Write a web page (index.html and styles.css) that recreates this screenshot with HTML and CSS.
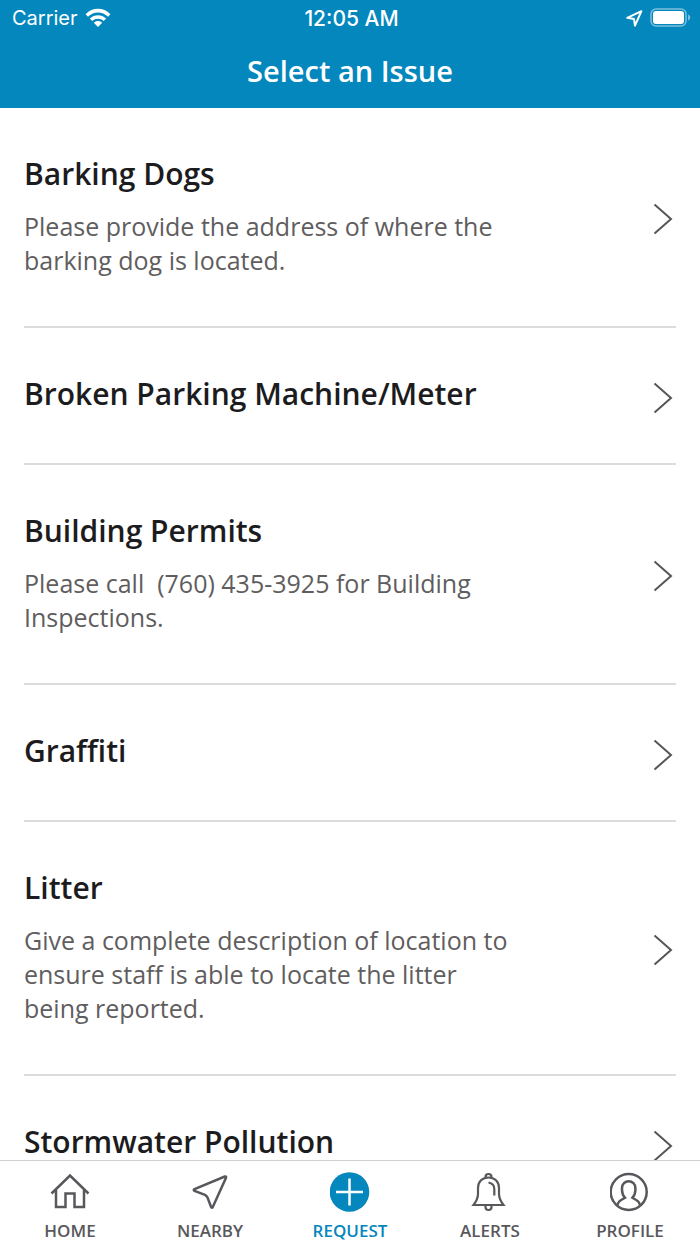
FILE: index.html
```html
<!DOCTYPE html>
<html lang="en">
<head>
<meta charset="utf-8">
<meta name="viewport" content="width=device-width, initial-scale=1">
<title>Select an Issue</title>
<link rel="stylesheet" href="styles.css">
</head>
<body>
<div class="app">
  <header class="header">
    <div class="status">
      <div class="status-left">
        <span>Carrier</span>
        <svg class="wifi" viewBox="0 0 26 19" aria-hidden="true">
          <path d="M0.6 6.2C7.4-1.1 18.6-1.1 25.4 6.2L23 8.8C17.4 3 8.600 3 3 8.800Z"/>
          <path d="M4.800 10.500C9.300 6 16.700 6 21.200 10.500L18.700 13.100C15.500 10.100 10.500 10.100 7.300 13.100Z"/>
          <path d="M8.800 14.800C11.200 12.500 14.800 12.500 17.200 14.800L13 19Z"/>
        </svg>
      </div>
      <div class="clock">12:05 AM</div>
      <div class="status-right">
        <svg class="location" viewBox="0 0 17 17" aria-hidden="true"><path d="M1.200 7.800L15.400 1.200L9 15.600L8 9Z"/></svg>
        <svg class="battery" viewBox="0 0 41 20" aria-hidden="true">
          <rect class="shell" x="1" y="1" width="35" height="17" rx="5"/>
          <rect class="charge" x="3" y="3" width="31" height="13" rx="3"/>
          <path class="cap" d="M38 6.500C41 7.500 41 11.500 38 12.500Z"/>
        </svg>
      </div>
    </div>
    <h1 class="title">Select an Issue</h1>
  </header>
  <main class="issues">
    <a class="issue" href="#barking-dogs">
      <div class="issue-text"><h2>Barking Dogs</h2><p>Please provide the address of where the barking dog is located.</p></div>
      <svg class="chevron" viewBox="0 0 20 32" aria-hidden="true"><path d="M1.500 1.500L18 16L1.500 30.500"/></svg>
    </a>
    <a class="issue" href="#parking-meter">
      <div class="issue-text"><h2>Broken Parking Machine/Meter</h2></div>
      <svg class="chevron" viewBox="0 0 20 32" aria-hidden="true"><path d="M1.500 1.500L18 16L1.500 30.500"/></svg>
    </a>
    <a class="issue" href="#building-permits">
      <div class="issue-text"><h2>Building Permits</h2><p>Please call&nbsp; (760) 435-3925 for Building Inspections.</p></div>
      <svg class="chevron" viewBox="0 0 20 32" aria-hidden="true"><path d="M1.500 1.500L18 16L1.500 30.500"/></svg>
    </a>
    <a class="issue" href="#graffiti">
      <div class="issue-text"><h2>Graffiti</h2></div>
      <svg class="chevron" viewBox="0 0 20 32" aria-hidden="true"><path d="M1.500 1.500L18 16L1.500 30.500"/></svg>
    </a>
    <a class="issue" href="#litter">
      <div class="issue-text"><h2>Litter</h2><p>Give a complete description of location to ensure staff is able to locate the litter being reported.</p></div>
      <svg class="chevron" viewBox="0 0 20 32" aria-hidden="true"><path d="M1.500 1.500L18 16L1.500 30.500"/></svg>
    </a>
    <a class="issue" href="#stormwater">
      <div class="issue-text"><h2>Stormwater Pollution</h2></div>
      <svg class="chevron" viewBox="0 0 20 32" aria-hidden="true"><path d="M1.500 1.500L18 16L1.500 30.500"/></svg>
    </a>
  </main>
  <nav class="tabs">
    <a class="tab" href="#home">
      <svg viewBox="0 0 40 40" aria-hidden="true"><path d="M1.500 21.500L20 3.500L38.500 21.500M6 18V35H15.500V21.500H24.500V35H34V18"/></svg>
      <span>HOME</span>
    </a>
    <a class="tab" href="#nearby">
      <svg viewBox="0 0 40 40" aria-hidden="true"><path d="M4.500 17.200L34.800 4.500Q36.500 4 36 5.800L22.800 35Q21.800 36.500 21 34.800L17.500 25.500Q16.800 23.800 15 22.800L4.500 19Q3 18 4.500 17.200Z"/></svg>
      <span>NEARBY</span>
    </a>
    <a class="tab active" href="#request" aria-current="page">
      <svg viewBox="0 0 40 40" aria-hidden="true"><circle class="disc" cx="19.500" cy="20" r="19.800"/><path class="plus" d="M6 20H33M19.500 6.500V33.500"/></svg>
      <span>REQUEST</span>
    </a>
    <a class="tab" href="#alerts">
      <svg viewBox="0 0 40 40" aria-hidden="true"><path class="fine" d="M3.500 33Q8 27 8 22V16C8 9.500 12.500 5.500 18.500 5.500S29 9.500 29 16V22Q29 27 33.500 33ZM15.500 5.800V5A3 3 0 0 1 21.500 5V5.800M15.500 33V35A3 3 0 0 0 21.500 35V33M18.500 10.500Q24.300 11.500 24.300 17V23.500"/></svg>
      <span>ALERTS</span>
    </a>
    <a class="tab" href="#profile">
      <svg viewBox="0 0 40 40" aria-hidden="true"><circle cx="18.700" cy="20" r="18"/><path d="M7.200 33.500Q8.200 29.500 11.200 28L15 25.800Q12 22.500 12 18V16A6.700 6.800 0 0 1 25.400 16V18Q25.400 22.500 22.400 25.800L26.200 28Q29.200 29.500 30.200 33.500"/></svg>
      <span>PROFILE</span>
    </a>
  </nav>
</div>
</body>
</html>
```
FILE: styles.css
```css
* { box-sizing: border-box; }
body {
  margin: 0;
  background: #fff;
  font-family: "Open Sans", "Noto Sans", sans-serif;
}
h1, h2, p { margin: 0; }
a { color: inherit; text-decoration: none; }
svg { flex: none; fill: none; }

.app {
  display: flex;
  flex-direction: column;
  height: 100vh;
}

.header {
  flex: none;
  background: #0487bc;
  color: #fff;
}
.status {
  display: grid;
  grid-template-columns: 1fr auto 1fr;
  align-items: center;
  height: 36px;
  padding: 0 9px 0 12px;
  font: 20px "Inter", sans-serif;
}
.status-left, .status-right {
  display: flex;
  align-items: center;
}
.status-left { gap: 7px; }
.status-right { justify-content: flex-end; gap: 7px; }
.clock { font-size: 21px; font-weight: 500; }
.wifi { width: 26px; height: 19px; margin-bottom: 2px; fill: #fff; }
.location { width: 17px; height: 17px; stroke: #fff; stroke-width: 2; stroke-linejoin: round; }
.battery { width: 41px; height: 20px; }
.shell { stroke: #7cbfdc; stroke-width: 1.500; }
.charge { fill: #fff; }
.cap { fill: #7cbfdc; }
.title {
  height: 72px;
  font-size: 29px;
  font-weight: 600;
  line-height: 70px;
  text-align: center;
}

.issues {
  flex: 1;
  min-height: 0;
  overflow: hidden;
  padding: 0 24px;
}
.issue {
  display: flex;
  align-items: center;
  justify-content: space-between;
  padding: 44px 3px 47px 0;
  border-bottom: 2px solid #dcdcdd;
}
.issue-text { max-width: 500px; }
.issue h2 {
  color: #1c1c1e;
  font-size: 30px;
  font-weight: 600;
  line-height: 44px;
}
.issue p {
  padding: 13px 0 2px;
  color: #5f5d5e;
  font-size: 25px;
  line-height: 34px;
}
.chevron {
  width: 20px;
  height: 32px;
  margin-top: 7px;
  stroke: #565558;
  stroke-width: 2;
}

.tabs {
  flex: none;
  display: grid;
  grid-template-columns: repeat(5, 1fr);
  height: 84px;
  border-top: 1px solid #cfcfd1;
  background: #fff;
}
.tab {
  display: flex;
  flex-direction: column;
  align-items: center;
  gap: 7px;
  padding-top: 11px;
  color: #58585c;
  font-size: 17px;
  font-weight: 600;
  line-height: 24px;
}
.tab svg {
  width: 40px;
  height: 40px;
  stroke: currentColor;
  stroke-width: 2.500;
}
.tab .fine { stroke-width: 2.200; }
.tab.active { color: #0487bc; }
.tab .disc { fill: #0487bc; stroke: none; }
.tab .plus { stroke: #fff; }
```
